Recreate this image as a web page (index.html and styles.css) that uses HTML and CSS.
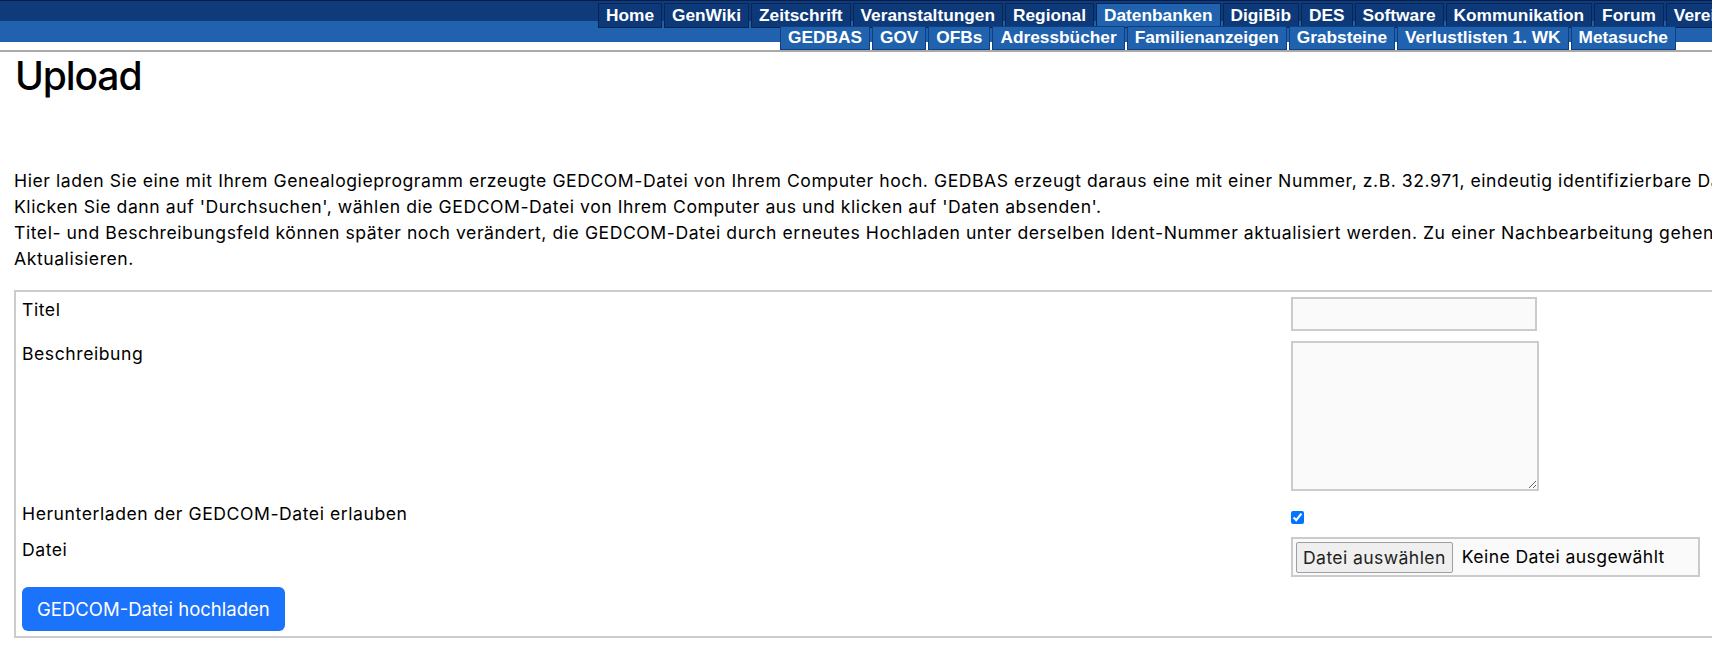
FILE: index.html
```
<!DOCTYPE html>
<html lang="de">
  <head>
    <meta charset="UTF-8" />
    <meta name="viewport" content="width=device-width, initial-scale=1.0" />
    <title>GEDBAS - Upload</title>
    <link rel="stylesheet" href="styles.css">
  </head>
  <body>
    <div class="header">
      <ul class="menu">
        <li><a href="#">Home</a></li>
        <li><a href="#">GenWiki</a></li>
        <li><a href="#">Zeitschrift</a></li>
        <li><a href="#">Veranstaltungen</a></li>
        <li><a href="#">Regional</a></li>
        <li class="active"><a href="#">Datenbanken</a></li>
        <li><a href="#">DigiBib</a></li>
        <li><a href="#">DES</a></li>
        <li><a href="#">Software</a></li>
        <li><a href="#">Kommunikation</a></li>
        <li><a href="#">Forum</a></li>
        <li><a href="#">Verein</a></li>
      </ul>
      <ul class="submenu">
        <li><a href="#">GEDBAS</a></li>
        <li><a href="#">GOV</a></li>
        <li><a href="#">OFBs</a></li>
        <li><a href="#">Adressbücher</a></li>
        <li><a href="#">Familienanzeigen</a></li>
        <li><a href="#">Grabsteine</a></li>
        <li><a href="#">Verlustlisten 1. WK</a></li>
        <li><a href="#">Metasuche</a></li>
      </ul>
    </div>

    <div class="content">
      <h1>Upload</h1>

      <p class="intro">
        Hier laden Sie eine mit Ihrem Genealogieprogramm erzeugte GEDCOM-Datei von Ihrem Computer hoch. GEDBAS erzeugt daraus eine mit einer Nummer, z.B. 32.971, eindeutig identifizierbare Datenbank.<br />
        Klicken Sie dann auf 'Durchsuchen', wählen die GEDCOM-Datei von Ihrem Computer aus und klicken auf 'Daten absenden'.<br />
        Titel- und Beschreibungsfeld können später noch verändert, die GEDCOM-Datei durch erneutes Hochladen unter derselben Ident-Nummer aktualisiert werden. Zu einer Nachbearbeitung gehen Sie auf 'Meine Datenbanken' und dann auf<br />
        Aktualisieren.
      </p>

      <form class="upload-form" id="uploadForm">
        <label for="title">Titel</label>
        <div><input type="text" id="title" class="field" /></div>

        <label for="description">Beschreibung</label>
        <div><textarea id="description" class="field area"></textarea></div>

        <label for="allowDownload">Herunterladen der GEDCOM-Datei erlauben</label>
        <div><input type="checkbox" id="allowDownload" class="check" checked /></div>

        <label for="gedcomFile">Datei</label>
        <div>
          <label class="file-field">
            <input type="file" id="gedcomFile" class="file-input" />
            <span class="file-btn">Datei auswählen</span>
            <span class="file-name">Keine Datei ausgewählt</span>
          </label>
        </div>

        <div><button type="submit" class="submit-btn">GEDCOM-Datei hochladen</button></div>
      </form>
    </div>
  </body>
</html>
```

FILE: styles.css
```
html,
body {
  overflow: hidden;
}
body {
  margin: 0;
  font-family: Inter, "Noto Sans", sans-serif;
  font-size: 17.6px;
  line-height: 26px;
  letter-spacing: 0.55px;
  color: #000;
  background: #fff;
}

/* top navigation */
.header {
  height: 50px;
  border-bottom: 2px solid #a9a9a9;
  background: linear-gradient(
    #061d4b 0,
    #061d4b 1px,
    #0f3b7a 1px,
    #0f3b7a 21px,
    #2162ae 21px,
    #2162ae 42px,
    #fff 42px
  );
  font-family: "Liberation Sans", Arial, sans-serif;
  font-size: 17.3px;
  font-weight: bold;
  letter-spacing: 0;
  white-space: nowrap;
}
.menu,
.submenu {
  display: flex;
  list-style: none;
  margin: 0;
  padding: 0;
}
.menu {
  padding: 3px 0 0 598px;
}
.submenu {
  margin-top: -2px;
  padding-left: 780px;
}
.menu li,
.submenu li {
  flex: none;
  margin-right: 2px;
}
.menu a,
.submenu a {
  display: block;
  padding: 0 7px;
  color: white;
  text-decoration: none;
}
.menu a {
  line-height: 23px;
  background-color: #0e3978;
  border: 1px solid #062658;
}
.menu .active a {
  background-color: #2162ae;
}
.submenu a {
  line-height: 21px;
  padding-bottom: 1px;
  background-color: #2162ae;
  border: 1px solid #0f3f80;
}

/* page */
.content {
  width: 2100px;
  padding-left: 14px;
}
h1 {
  margin: 0;
  padding-left: 1px;
  font-size: 39px;
  font-weight: 500;
  line-height: 48px;
  letter-spacing: -1.1px;
}
.intro {
  margin: 68px 0 18px;
}

/* form */
.upload-form {
  display: grid;
  grid-template-columns: 1269px 1fr;
  row-gap: 10px;
  width: 2000px;
  padding: 5px 6px 5px;
  border: 2px solid #cccccc;
}
.field {
  display: block;
  box-sizing: border-box;
  width: 246px;
  height: 34px;
  margin: 0;
  border: 2px solid #cbcbcb;
  background: #fafafa;
  font: inherit;
}
.area {
  width: 248px;
  height: 150px;
}
.check {
  display: block;
  width: 13px;
  height: 13px;
  margin: 10px 0 0;
}
.file-field {
  display: flex;
  align-items: center;
  box-sizing: border-box;
  width: 409px;
  height: 40px;
  padding: 0 3px;
  border: 2px solid #cbcbcb;
  background: #fafafa;
}
.file-input {
  display: none;
}
.file-btn {
  box-sizing: border-box;
  height: 31px;
  padding: 0 6px;
  line-height: 29px;
  letter-spacing: 0.4px;
  background: #efefef;
  border: 1px solid #9f9f9f;
  border-radius: 2px;
  color: #222;
}
.file-name {
  margin-left: 9px;
  letter-spacing: 0.4px;
}
.submit-btn {
  height: 44px;
  padding: 0 15px;
  border: none;
  border-radius: 6px;
  background-color: #1b72fb;
  color: white;
  font-family: inherit;
  font-size: 18.5px;
  letter-spacing: 0;
  white-space: nowrap;
  cursor: pointer;
}
```
